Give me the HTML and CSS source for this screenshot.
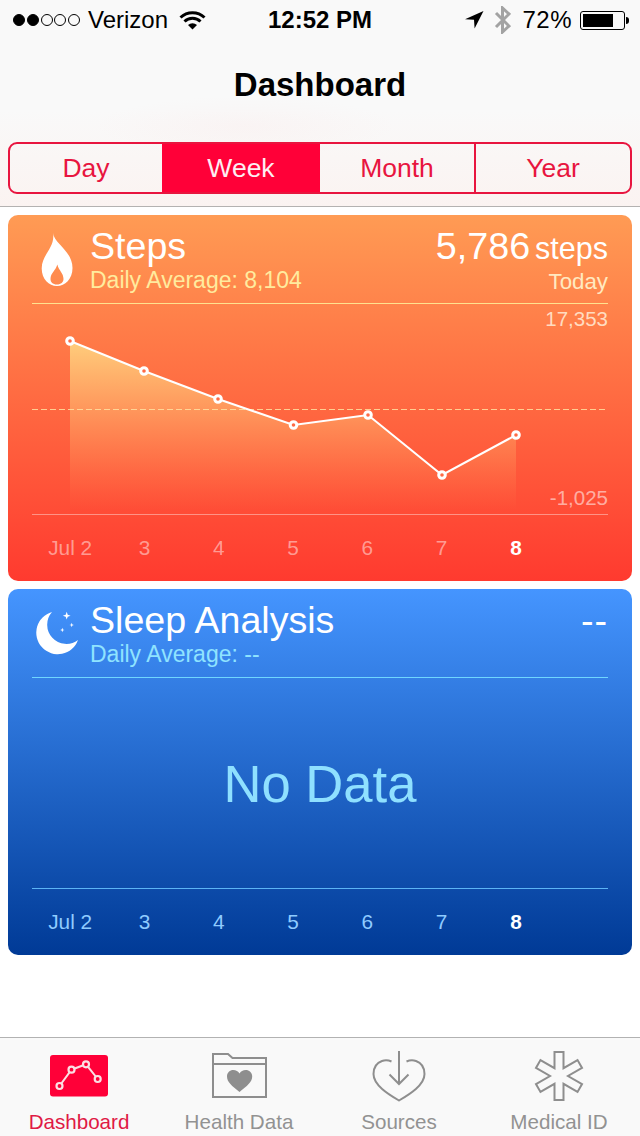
FILE: index.html
```html
<!DOCTYPE html>
<html lang="en">
<head>
<meta charset="utf-8">
<title>Dashboard</title>
<link rel="stylesheet" href="styles.css">
</head>
<body>
<div class="app">
  <header class="header">
    <div class="status">
      <div class="status-left">
        <span class="dots"><i class="dot on"></i><i class="dot on"></i><i class="dot"></i><i class="dot"></i><i class="dot"></i></span>
        <span class="carrier">Verizon</span>
        <svg class="ico-wifi" viewBox="178 8 30 24" width="30" height="24"><path d="M180.5 17.5a17.5 17.5 0 0 1 24 0" /><path d="M184.5 21.5a11.5 11.5 0 0 1 16 0" /><path class="solid" d="M188 25a6.6 6.6 0 0 1 9 0l-4.500 4.500z"/></svg>
      </div>
      <div class="time">12:52 PM</div>
      <div class="status-right">
        <svg class="ico-loc" viewBox="462 10 22 22" width="22" height="22"><polygon points="482.500,12 464,20.200 473,20.800 473.600,29.500"/></svg>
        <svg class="ico-bt" viewBox="492 6 18 28" width="18" height="28"><path d="M495 13l13 13-6.500 6V8l6.500 6-13 13"/></svg>
        <span class="pct">72%</span>
        <span class="battery"><span class="battery-fill"></span></span>
        <span class="battery-nub"></span>
      </div>
    </div>
    <h1 class="title">Dashboard</h1>
    <nav class="segment">
      <span class="seg">Day</span>
      <span class="seg seg-on">Week</span>
      <span class="seg">Month</span>
      <span class="seg seg-last">Year</span>
    </nav>
  </header>

  <main class="main">
    <section class="card card-steps">
      <div class="head">
        <svg class="head-ico" viewBox="32 215 58 88" width="58" height="88"><path fill-rule="evenodd" d="M53 233C54.500 244 72.500 251 72.500 268C72.500 279 65 286 57 286C49 286 41.700 279 41.700 268.500C41.700 254 55.500 248 53 233ZM57.300 264.500C55.500 271 50.500 273 50.500 279C50.500 282 52.500 284.500 57 284.500C61 284.500 63.500 282 63.500 279C63.500 273 59 271 57.300 264.500Z"/></svg>
        <div class="titles">
          <div class="name">Steps</div>
          <div class="sub">Daily Average: 8,104</div>
        </div>
        <div class="reading">
          <div class="val"><span class="num">5,786</span><span class="unit">steps</span></div>
          <div class="when">Today</div>
        </div>
      </div>
      <div class="plot">
        <svg class="plot-svg" viewBox="32 304 576 210" width="576" height="210">
          <defs>
            <linearGradient id="area" x1="0" y1="0" x2="0" y2="1">
              <stop offset="0" stop-color="#ffd27f" stop-opacity=".95"/>
              <stop offset="1" stop-color="#ff9a5c" stop-opacity="0"/>
            </linearGradient>
          </defs>
          <polygon fill="url(#area)" points="70,341 144,371 218,399 293.500,425 368,415 442,475 516,435 516,510 70,510"/>
          <line class="dash" x1="32" y1="409.500" x2="608" y2="409.500"/>
          <polyline class="trace" points="70,341 144,371 218,399 293.500,425 368,415 442,475 516,435"/>
          <g class="marks">
            <circle cx="70" cy="341" r="3.300"/><circle cx="144" cy="371" r="3.300"/><circle cx="218" cy="399" r="3.300"/><circle cx="293.500" cy="425" r="3.300"/><circle cx="368" cy="415" r="3.300"/><circle cx="442" cy="475" r="3.300"/><circle cx="516" cy="435" r="3.300"/>
          </g>
        </svg>
        <span class="limit limit-top">17,353</span>
        <span class="limit limit-low">-1,025</span>
      </div>
      <div class="days">
        <span>Jul 2</span><span>3</span><span>4</span><span>5</span><span>6</span><span>7</span><span class="today">8</span>
      </div>
    </section>

    <section class="card card-sleep">
      <div class="head">
        <svg class="head-ico" viewBox="32 589 58 88" width="58" height="88"><path d="M52 612A21.500 21.500 0 1 0 78 640A19.200 19.200 0 0 1 52 612Z"/><path d="M66.700 611.800l1 2.900 2.900 1-2.900 1-1 2.900-1-2.900-2.900-1 2.900-1z"/><path d="M71.700 622.800l.6 1.600 1.600.6-1.600.6-.6 1.600-.6-1.600-1.600-.6 1.600-.6z"/><path d="M62.300 627.800l.6 1.600 1.600.6-1.600.6-.6 1.600-.6-1.600-1.600-.6 1.600-.6z"/></svg>
        <div class="titles">
          <div class="name">Sleep Analysis</div>
          <div class="sub">Daily Average: --</div>
        </div>
        <div class="reading">
          <div class="val"><span class="num num-empty">--</span></div>
        </div>
      </div>
      <div class="plot plot-empty">No Data</div>
      <div class="days">
        <span>Jul 2</span><span>3</span><span>4</span><span>5</span><span>6</span><span>7</span><span class="today">8</span>
      </div>
    </section>
  </main>

  <footer class="tabs">
    <div class="tab tab-on">
      <svg viewBox="47 1050 64 56" width="64" height="56"><rect class="tile" x="50" y="1055" width="58" height="41.500" rx="3"/><polyline class="tile-line" points="59.500,1086 71.500,1069.700 86,1064.300 97.700,1079"/><g class="tile-dots"><circle cx="59.500" cy="1086" r="3"/><circle cx="71.500" cy="1069.700" r="3"/><circle cx="86" cy="1064.300" r="3"/><circle cx="97.700" cy="1079" r="3"/></g></svg>
      <span>Dashboard</span>
    </div>
    <div class="tab">
      <svg viewBox="207 1050 64 56" width="64" height="56"><path class="outline" d="M213 1064V1054h15l4.500 4H266V1097H213V1064H266"/><path class="solid-grey" d="M239.500 1092C232 1086 227 1082 227 1076.500C227 1072.500 230 1070 233.200 1070C236 1070 238.300 1071.500 239.500 1073.500C240.700 1071.500 243 1070 245.800 1070C249 1070 252.200 1072.500 252.200 1076.500C252.200 1082 247 1086 239.500 1092Z"/></svg>
      <span>Health Data</span>
    </div>
    <div class="tab">
      <svg viewBox="367 1050 64 56" width="64" height="56"><path class="outline" d="M391.500 1061.500C388 1060 385 1060 382 1061C376.500 1063 373.500 1068 373.500 1074C373.500 1085 388 1094 399 1100.500C410 1094 424.500 1085 424.500 1074C424.500 1068 421.500 1063 416 1061C413 1060 410 1060 406.500 1061.500"/><path class="outline" d="M399 1051V1083.500M389.500 1074.500L399 1084L408.500 1074.500"/></svg>
      <span>Sources</span>
    </div>
    <div class="tab">
      <svg viewBox="527 1050 64 56" width="64" height="56"><polygon class="outline" transform="translate(559 1076)" points="-4.500,-24 4.500,-24 4.500,-7.800 18.530,-15.900 23.030,-8.100 9,0 23.030,8.100 18.530,15.900 4.500,7.800 4.500,24 -4.500,24 -4.500,7.800 -18.530,15.900 -23.030,8.100 -9,0 -23.030,-8.100 -18.530,-15.900 -4.500,-7.800"/></svg>
      <span>Medical ID</span>
    </div>
  </footer>
</div>
</body>
</html>
```

FILE: styles.css
```css
* { box-sizing: border-box; }

html, body {
  margin: 0;
  padding: 0;
  background: #fff;
}

.app {
  width: 640px;
  height: 1136px;
  display: flex;
  flex-direction: column;
  overflow: hidden;
  font-family: "Liberation Sans", Arial, sans-serif;
  color: #000;
}

/* header */
.header {
  height: 207px;
  flex: none;
  border-bottom: 1px solid #b4b2b1;
  background:
    radial-gradient(ellipse 150px 30px at 245px 126px, rgba(255, 205, 205, .1), rgba(255, 220, 220, 0) 100%),
    linear-gradient(#f9f9f9 0, #f9f9f9 110px, #fbf3f1 206px);
}

.status {
  height: 40px;
  display: grid;
  grid-template-columns: 1fr auto 1fr;
  align-items: center;
  font-size: 24px;
}

.status-left {
  display: flex;
  align-items: center;
  padding-left: 13px;
}

.dots {
  display: flex;
  gap: 1.750px;
  width: 75px;
}

.dot {
  width: 12px;
  height: 12px;
  border-radius: 50%;
  border: 1px solid #000;
}

.dot.on { background: #000; }

.carrier { margin-right: 10px; }

.ico-wifi path {
  fill: none;
  stroke: #000;
  stroke-width: 3;
}

.ico-wifi .solid {
  fill: #000;
  stroke: none;
}

.time { font-weight: 700; }

.status-right {
  display: flex;
  align-items: center;
  justify-content: flex-end;
  padding-right: 11px;
}

.ico-loc { fill: #000; margin-right: 8px; }

.ico-bt {
  fill: none;
  stroke: #a3a3a3;
  stroke-width: 3;
  margin-right: 11px;
}

.pct { letter-spacing: .5px; margin-right: 8px; }

.battery {
  width: 45px;
  height: 19px;
  border: 1px solid #000;
  border-radius: 3px;
  padding: 2px;
  display: block;
}

.battery-fill {
  display: block;
  width: 30px;
  height: 100%;
  background: #000;
}

.battery-nub {
  width: 3px;
  height: 7px;
  margin-left: 1px;
  background: #000;
  border-radius: 0 3px 3px 0;
}

.title {
  margin: 0;
  height: 90px;
  line-height: 90px;
  text-align: center;
  font-size: 33px;
  font-weight: 700;
}

.segment {
  margin: 12px 8px 0;
  height: 52px;
  display: grid;
  grid-template-columns: 152px 158px 154px 1fr;
  border: 2px solid #e8153f;
  border-radius: 9px;
  overflow: hidden;
}

.seg {
  display: flex;
  align-items: center;
  justify-content: center;
  font-size: 26.500px;
  color: #e8153f;
}

.seg-on {
  background: #ff0038;
  color: #fdeef2;
}

.seg-last { border-left: 2px solid #e8153f; }

/* cards */
.main {
  flex: 1;
  display: flex;
  flex-direction: column;
  gap: 8px;
  padding: 8px 8px 0;
}

.card {
  height: 366px;
  padding: 0 24px;
  border-radius: 10px;
  display: flex;
  flex-direction: column;
}

.card-steps {
  background: linear-gradient(#ff9b54, #ff3a2f);
  --rule: #ffe28f;
  --accent: #ffeb9e;
  --soft: rgba(255, 255, 255, .48);
}

.card-sleep {
  background: linear-gradient(#4595ff, #003a96);
  --rule: #6fd6ff;
  --accent: #8fe3ff;
  --soft: #8fcbff;
}

.head {
  height: 89px;
  flex: none;
  display: flex;
  border-bottom: 1px solid var(--rule);
  color: #fff;
}

.head-ico {
  flex: none;
  fill: #fff;
}

.titles {
  flex: 1;
  padding-top: 11px;
}

.name {
  font-size: 37.600px;
  line-height: 41px;
}

.sub {
  font-size: 23px;
  line-height: 26px;
  color: var(--accent);
}

.reading {
  padding-top: 11px;
  text-align: right;
}

.val {
  display: flex;
  align-items: baseline;
  justify-content: flex-end;
  gap: 5px;
  line-height: 41px;
}

.num { font-size: 37.700px; }

.num-empty { letter-spacing: 1px; }

.unit { font-size: 30.500px; }

.when {
  font-size: 22.300px;
  line-height: 26px;
  color: #ffe9c0;
}

.plot {
  height: 211px;
  flex: none;
  position: relative;
  border-bottom: 1px solid rgba(255, 255, 255, .4);
}

.plot-svg { display: block; }

.dash {
  stroke: #ffe0a0;
  stroke-width: 1;
  stroke-dasharray: 6 3;
  opacity: .85;
}

.trace {
  fill: none;
  stroke: #fff;
  stroke-width: 2;
}

.marks circle {
  fill: #ff6a45;
  stroke: #fff;
  stroke-width: 3;
}

.limit {
  position: absolute;
  right: 0;
  font-size: 20.500px;
  line-height: 24px;
  color: #ffdcc0;
}

.limit-top { top: 3px; }

.limit-low { bottom: 4px; color: rgba(255, 255, 255, .55); }

.plot-empty {
  display: flex;
  align-items: center;
  justify-content: center;
  font-size: 52.600px;
  color: #8fe0ff;
  border-bottom-color: #5cb4f5;
}

.days {
  flex: 1;
  display: grid;
  grid-template-columns: repeat(7, 74.300px);
  margin-left: 1px;
  align-items: center;
  justify-items: center;
  align-content: center;
  font-size: 20.800px;
  color: var(--soft);
}

.today {
  color: #fff;
  font-weight: 700;
}

/* tab bar */
.tabs {
  height: 99px;
  flex: none;
  display: grid;
  grid-template-columns: repeat(4, 160px);
  margin-left: -1px;
  padding-top: 12px;
  border-top: 1px solid #b2b2b2;
  background: #f9f9f9;
}

.tab {
  display: flex;
  flex-direction: column;
  align-items: center;
  gap: 4px;
  font-size: 20.600px;
  line-height: 24px;
  color: #929292;
}

.tab svg { display: block; }

.tab-on { color: #e01a45; }

.tile { fill: #ff0038; }

.tile-line {
  fill: none;
  stroke: #fbe0e4;
  stroke-width: 2;
}

.tile-dots circle {
  fill: #ff0038;
  stroke: #fbe0e4;
  stroke-width: 2.200;
}

.outline {
  fill: none;
  stroke: #8e8e8e;
  stroke-width: 2;
}

.solid-grey { fill: #8e8e8e; }
```
